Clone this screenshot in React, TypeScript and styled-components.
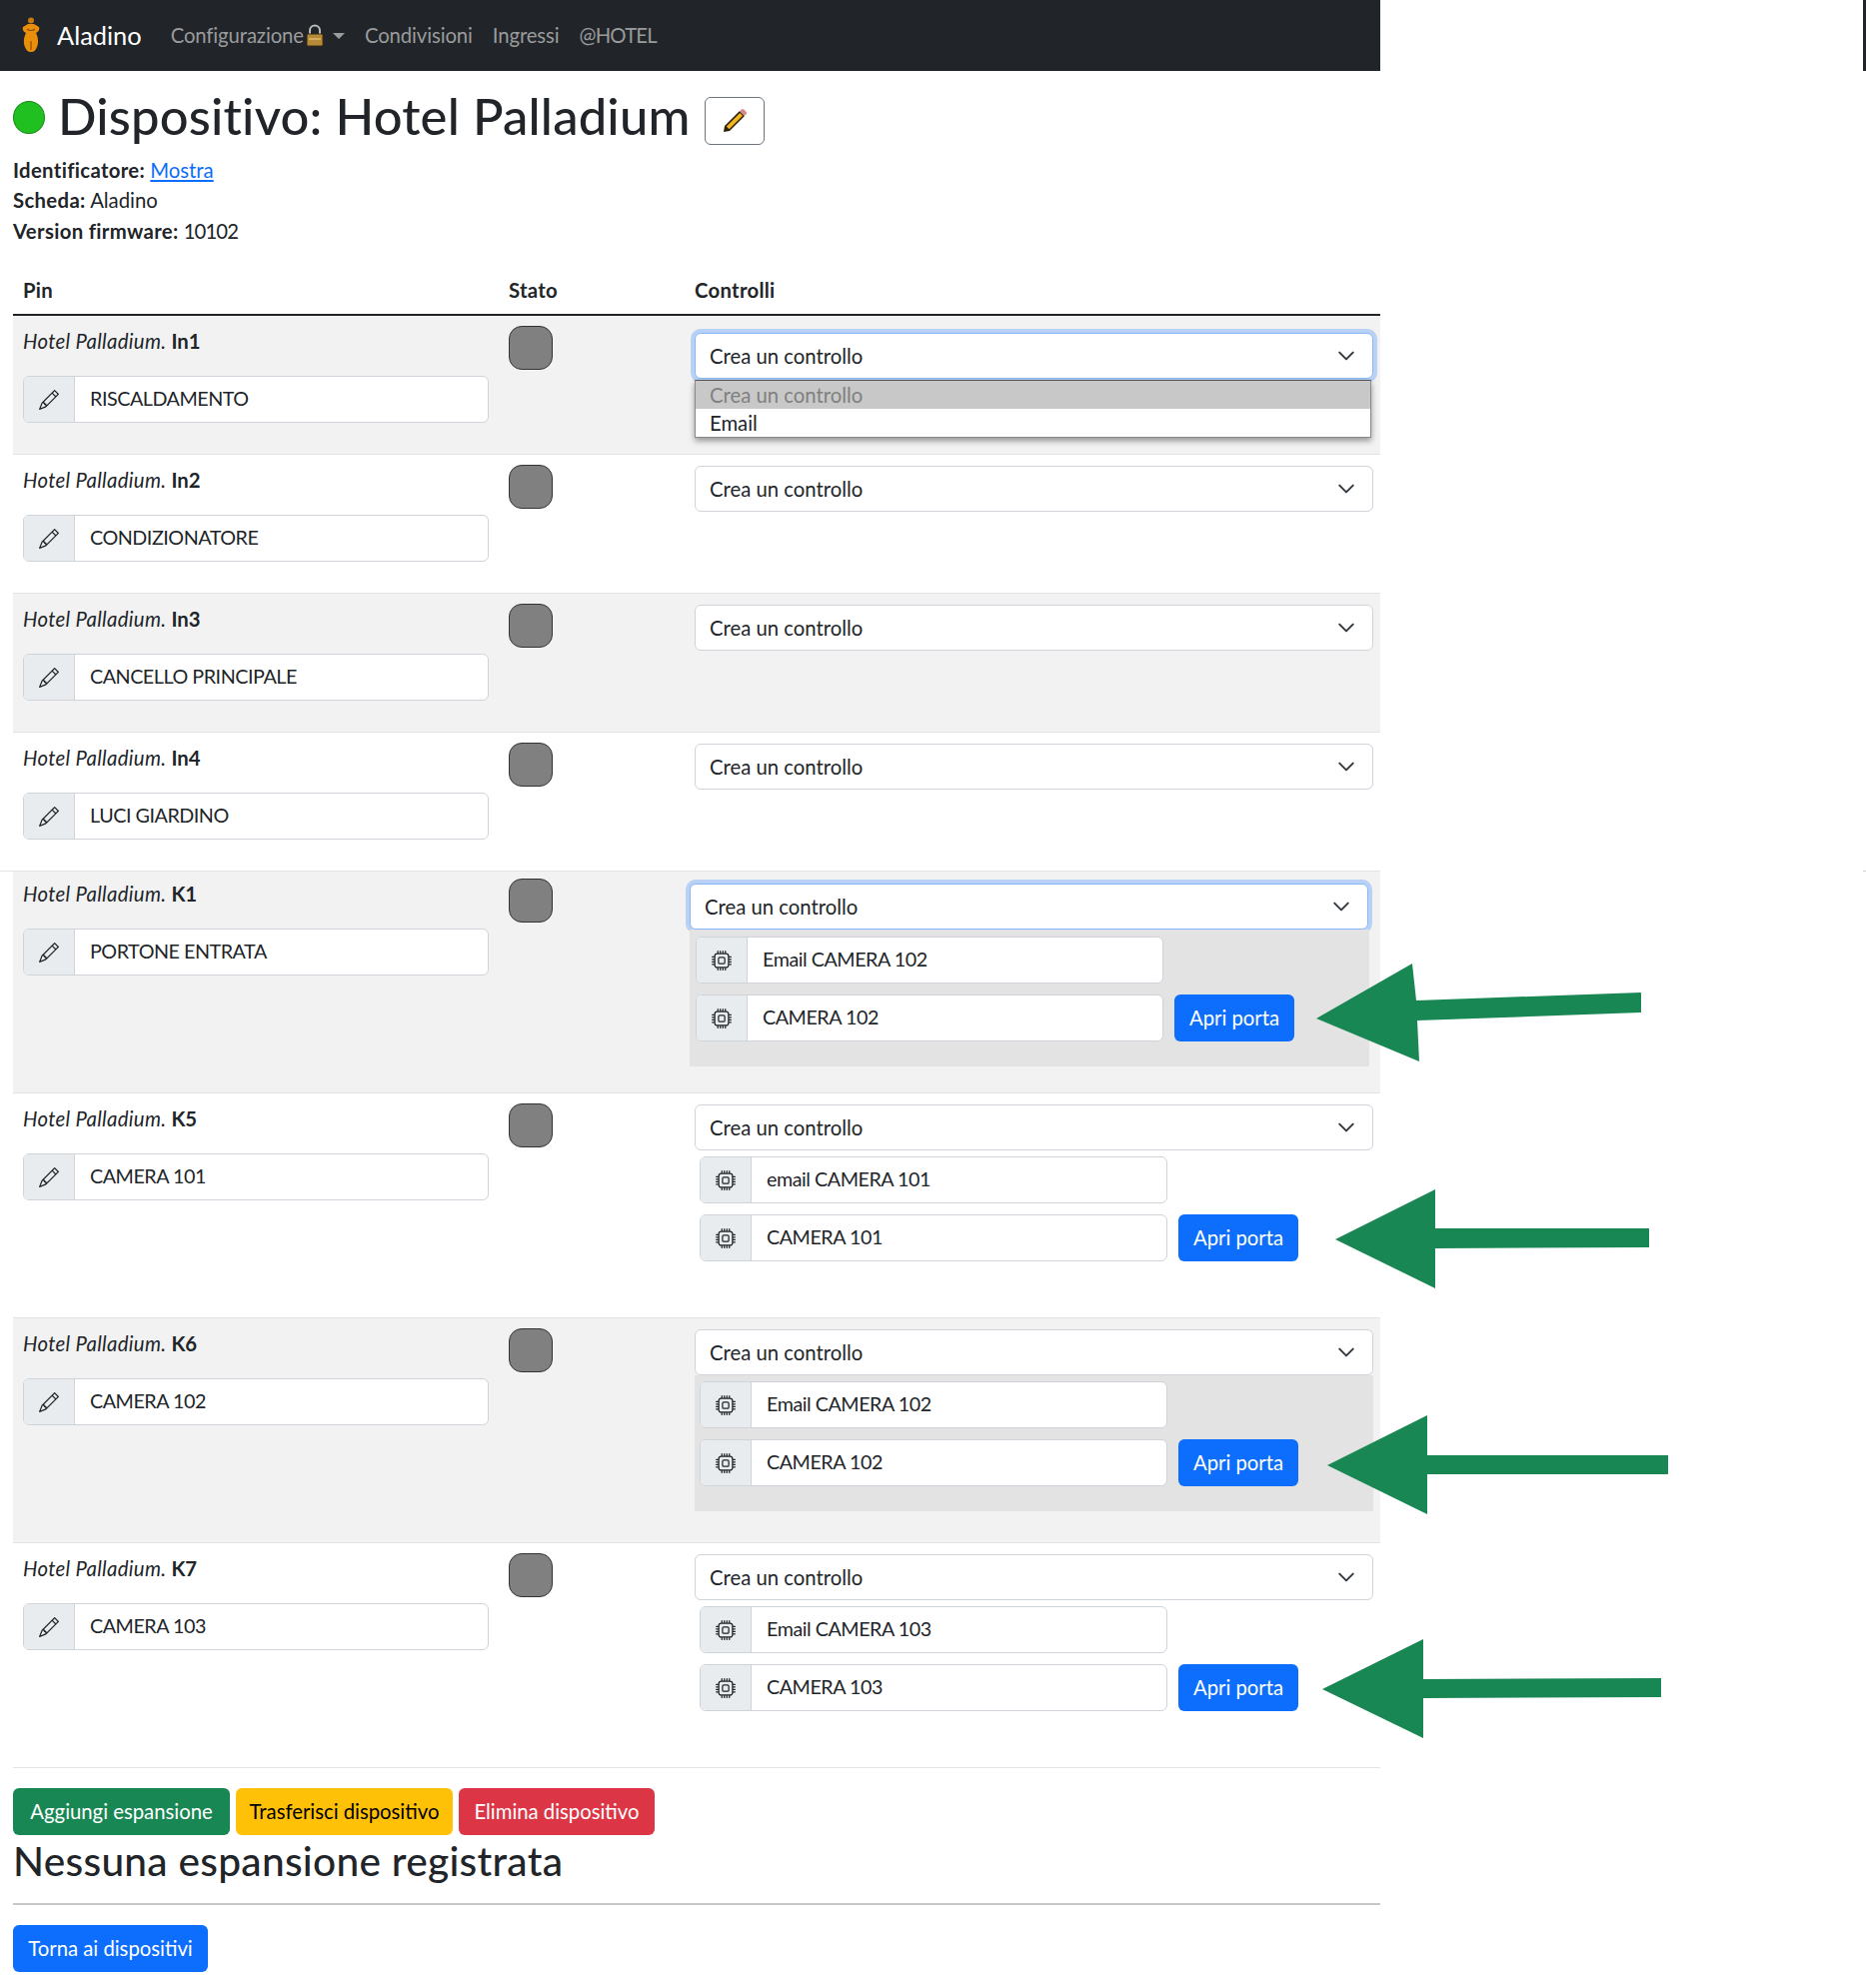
import { createGlobalStyle, styled } from "styled-components";
import { BsCpu, BsPencil } from "react-icons/bs";

const GlobalStyle = createGlobalStyle`
  html, body {
    margin: 0;
    padding: 0;
    background: #fff;
  }
  body {
    font-family: Lato, "Open Sans", "Liberation Sans", sans-serif;
    font-size: 20.3px;
    line-height: 30.4px;
    color: #212529;
  }
  * {
    box-sizing: border-box;
  }
`;

const Page = styled.div`
  position: relative;
  width: 1867px;
  height: 1989px;
  overflow: hidden;

  &::after {
    content: "";
    position: absolute;
    top: 0;
    right: 0;
    width: 3px;
    height: 71px;
    background: #212529;
  }
`;

const Navbar = styled.nav`
  width: 1381px;
  height: 71px;
  background: #212529;
  display: flex;
  align-items: center;
  padding-left: 21px;
`;

const Brand = styled.a`
  display: flex;
  align-items: center;
  gap: 16px;
  font-size: 25.4px;
  line-height: 28px;
  margin-top: -2px;
  color: #fff;
  margin-right: 29px;
`;

const NavLink = styled.a<{ $spacing?: number }>`
  display: flex;
  align-items: center;
  color: #9a9b9c;
  margin-right: 20px;
  letter-spacing: ${(p) => p.$spacing ?? -0.1}px;
`;

const Caret = styled.span`
  width: 0;
  height: 0;
  margin-left: 9px;
  border-top: 6px solid #9a9b9c;
  border-left: 6px solid transparent;
  border-right: 6px solid transparent;
`;

const Content = styled.main`
  width: 1381px;
  padding-left: 13px;
`;

const TitleRow = styled.div`
  display: flex;
  align-items: center;
  height: 84px;
  padding-top: 6px;
`;

const StatusDot = styled.span`
  width: 32px;
  height: 33px;
  margin: 2px 13px 0 0;
  border-radius: 50%;
  background: #1fc01f;
  border: 1px solid #1a8a1a;
`;

const Title = styled.h1`
  margin: 0;
  font-size: 50.7px;
  line-height: 60px;
  font-weight: 500;
  letter-spacing: 0.2px;
`;

const EditButton = styled.button`
  width: 60px;
  height: 48px;
  margin: 10px 0 0 14px;
  padding: 0;
  display: flex;
  align-items: center;
  justify-content: center;
  background: #fff;
  border: 1px solid #6c757d;
  border-radius: 6px;
`;

const InfoLine = styled.div`
  height: 30.4px;
`;

const Label = styled.strong`
  font-weight: 700;
  letter-spacing: 0.35px;
`;

const ShowLink = styled.a`
  color: #0d6efd;
  text-decoration: underline;
`;

const FirmwareValue = styled.span`
  letter-spacing: -0.9px;
`;

const TableHead = styled.div`
  display: grid;
  grid-template-columns: 486px 186px 1fr;
  height: 41px;
  margin-top: 29px;
  border-bottom: 2px solid #212529;
  font-weight: 700;
  letter-spacing: 0.3px;
`;

const HeadCell = styled.div`
  padding: 0 10px;
`;

const Row = styled.div<{ $striped?: boolean; $height: number; $tight?: boolean }>`
  position: relative;
  display: grid;
  grid-template-columns: 486px 186px 1fr;
  height: ${(p) => p.$height}px;
  padding-top: ${(p) => (p.$tight ? 7 : 10)}px;
  background: ${(p) => (p.$striped ? "#f2f2f2" : "#fff")};
  border-bottom: 1px solid #e3e3e3;

  ${(p) =>
    p.$tight &&
    `
    &::before {
      content: "";
      position: absolute;
      top: -1px;
      left: -13px;
      width: 13px;
      height: 1px;
      background: #e3e3e3;
    }
    &::after {
      content: "";
      position: absolute;
      top: -1px;
      left: 1851px;
      width: 3px;
      height: 1px;
      background: #d0d0d0;
    }
  `}
`;

const PinCell = styled.div`
  padding: 0 10px;
`;

const PinName = styled.div`
  height: 30px;
  margin-bottom: 20px;
  font-style: italic;
  letter-spacing: 0.35px;

  strong {
    font-style: normal;
    font-weight: 700;
    letter-spacing: 0;
  }
`;

const InputGroup = styled.div<{ $width: number }>`
  display: flex;
  width: ${(p) => p.$width}px;
  height: 47px;
  border: 1px solid #ced4da;
  border-radius: 6px;
  overflow: hidden;
  background: #fff;
`;

const Addon = styled.span`
  flex: 0 0 51px;
  display: flex;
  align-items: center;
  justify-content: center;
  background: #e9ecef;
  border-right: 1px solid #ced4da;
`;

const FieldText = styled.div`
  flex: 1;
  display: flex;
  align-items: center;
  padding-left: 15px;
  font-size: 19.7px;
  letter-spacing: -0.45px;
`;

const StatoCell = styled.div`
  padding: 0 10px;
`;

const StatusBox = styled.div`
  width: 44px;
  height: 44px;
  background: #808080;
  border: 1px solid #333;
  border-radius: 13px;
`;

const ControlCell = styled.div<{ $shift?: boolean }>`
  position: relative;
  padding-left: 10px;
  margin-left: ${(p) => (p.$shift ? -5 : 0)}px;
`;

const SelectBox = styled.div<{ $focus?: boolean; $drop?: number }>`
  display: flex;
  align-items: center;
  justify-content: space-between;
  width: 679px;
  height: 46px;
  margin-top: ${(p) => p.$drop ?? 1}px;
  padding: 0 17px 0 14px;
  background: #fff;
  border: 1px solid ${(p) => (p.$focus ? "#86b7fe" : "#ced4da")};
  border-radius: 6px;
  box-shadow: ${(p) =>
    p.$focus ? "0 0 0 4px rgba(13, 110, 253, 0.25)" : "none"};
`;

const DropList = styled.div`
  position: absolute;
  top: 54px;
  left: 10px;
  width: 677px;
  background: #fff;
  border: 1px solid #8a8a8a;
  border-top-color: #555;
  box-shadow: 0 3px 6px rgba(0, 0, 0, 0.4);
`;

const DropItem = styled.div<{ $active?: boolean }>`
  height: 28px;
  line-height: 28px;
  padding-left: 14px;
  background: ${(p) => (p.$active ? "#c8c8c8" : "#fff")};
  color: ${(p) => (p.$active ? "#808080" : "#212529")};
`;

const Panel = styled.div<{ $striped?: boolean; $focus?: boolean }>`
  width: ${(p) => (p.$focus ? 680 : 679)}px;
  padding: ${(p) => (p.$focus ? "7px 0 25px 6px" : "6px 0 25px 5px")};
  background: ${(p) => (p.$striped ? "#e3e3e3" : "transparent")};
  display: flex;
  flex-direction: column;
  gap: 11px;
`;

const ControlLine = styled.div`
  display: flex;
  gap: 11px;
`;

const Btn = styled.button<{ $color: string; $text?: string; $width?: number }>`
  height: 47px;
  width: ${(p) => (p.$width ? `${p.$width}px` : "auto")};
  padding: 0 ${(p) => (p.$width ? 0 : 16)}px;
  font: inherit;
  color: ${(p) => p.$text ?? "#fff"};
  background: ${(p) => p.$color};
  border: none;
  border-radius: 6px;
`;

const Actions = styled.div`
  display: flex;
  gap: 6px;
  margin-top: 20px;
`;

const SubTitle = styled.h2`
  margin: 1px 0 0;
  font-size: 40.6px;
  line-height: 49px;
  font-weight: 500;
  letter-spacing: 0.3px;
`;

const Divider = styled.hr`
  height: 2px;
  margin: 18px 0 20px;
  border: none;
  background: #c8c8c8;
`;

const ArrowLayer = styled.svg`
  position: absolute;
  top: 0;
  left: 0;
  pointer-events: none;
`;

const Chevron = () => (
  <svg width="18" height="18" viewBox="0 0 16 16">
    <path
      d="m2 5 6 6 6-6"
      fill="none"
      stroke="#343a40"
      strokeWidth="1.8"
      strokeLinecap="round"
      strokeLinejoin="round"
    />
  </svg>
);

const Logo = () => (
  <svg width="20" height="36" viewBox="0 0 20 36">
    <circle cx="10" cy="3.5" r="3" fill="#c9790c" />
    <path
      d="M7 7h6l5 3c1 3-1 5-3 6 2 4 3 9 1 14-1 3-3 5-6 5s-5-2-6-5C2 25 3 20 5 16c-2-1-4-3-3-6z"
      fill="#ea8f0c"
    />
    <path d="M6 12c2 2 6 2 8 0M10 24v9" stroke="#8a5206" strokeWidth="1.2" fill="none" />
  </svg>
);

const Lock = () => (
  <svg width="18" height="23" viewBox="0 0 18 23" style={{ marginLeft: 2 }}>
    <path
      d="M4 11V6.5a5 5 0 0 1 10 0V11"
      fill="none"
      stroke="#b9b9b9"
      strokeWidth="2"
    />
    <rect x="1" y="10" width="16" height="12" rx="1.5" fill="#b58b3a" stroke="#3a2c10" />
    <rect x="3" y="14" width="12" height="2" fill="#d6ad5c" />
  </svg>
);

const YellowPencil = () => (
  <svg width="26" height="26" viewBox="0 0 26 26">
    <path d="M18 3l5 5L8 23l-6 1 1-6z" fill="#2a2208" />
    <path d="M18.3 5l2.8 2.8L7.6 21.2l-2.8-2.8z" fill="#f2b51d" />
    <path d="M18 3.2l1.6-1.5a2 2 0 0 1 2.9 0l1.9 1.9a2 2 0 0 1 0 2.9L22.8 8z" fill="#d98a8a" />
  </svg>
);

type ControlItem = { text: string; action?: boolean };

type PinRow = {
  pin: string;
  name: string;
  height: number;
  tight?: boolean;
  open?: boolean;
  focus?: boolean;
  controls?: ControlItem[];
};

const rows: PinRow[] = [
  { pin: "In1", name: "RISCALDAMENTO", height: 139, open: true },
  { pin: "In2", name: "CONDIZIONATORE", height: 139 },
  { pin: "In3", name: "CANCELLO PRINCIPALE", height: 139 },
  { pin: "In4", name: "LUCI GIARDINO", height: 139 },
  {
    pin: "K1",
    name: "PORTONE ENTRATA",
    height: 222,
    tight: true,
    focus: true,
    controls: [{ text: "Email CAMERA 102" }, { text: "CAMERA 102", action: true }],
  },
  {
    pin: "K5",
    name: "CAMERA 101",
    height: 225,
    controls: [{ text: "email CAMERA 101" }, { text: "CAMERA 101", action: true }],
  },
  {
    pin: "K6",
    name: "CAMERA 102",
    height: 225,
    controls: [{ text: "Email CAMERA 102" }, { text: "CAMERA 102", action: true }],
  },
  {
    pin: "K7",
    name: "CAMERA 103",
    height: 225,
    controls: [{ text: "Email CAMERA 103" }, { text: "CAMERA 103", action: true }],
  },
];

const arrows = [
  "1317,1019 1413,964 1417,1001 1642,993 1642,1013 1418,1021 1420,1062",
  "1336,1240 1436,1190 1436,1229 1650,1229 1650,1248 1436,1249 1436,1289",
  "1328,1466 1428,1416 1428,1456 1669,1456 1669,1475 1428,1475 1428,1515",
  "1323,1690 1424,1640 1424,1680 1662,1679 1662,1698 1424,1699 1424,1739",
];

const App = () => {
  return (
    <Page>
      <GlobalStyle />
      <Navbar>
        <Brand>
          <Logo />
          Aladino
        </Brand>
        <NavLink>
          Configurazione
          <Lock />
          <Caret />
        </NavLink>
        <NavLink>Condivisioni</NavLink>
        <NavLink>Ingressi</NavLink>
        <NavLink $spacing={-0.8}>@HOTEL</NavLink>
      </Navbar>
      <Content>
        <TitleRow>
          <StatusDot />
          <Title>Dispositivo: Hotel Palladium</Title>
          <EditButton>
            <YellowPencil />
          </EditButton>
        </TitleRow>
        <InfoLine>
          <Label>Identificatore:</Label> <ShowLink>Mostra</ShowLink>
        </InfoLine>
        <InfoLine>
          <Label>Scheda:</Label> Aladino
        </InfoLine>
        <InfoLine>
          <Label>Version firmware:</Label> <FirmwareValue>10102</FirmwareValue>
        </InfoLine>
        <TableHead>
          <HeadCell>Pin</HeadCell>
          <HeadCell>Stato</HeadCell>
          <HeadCell>Controlli</HeadCell>
        </TableHead>
        {rows.map((row, i) => (
          <Row key={row.pin} $striped={i % 2 === 0} $height={row.height} $tight={row.tight}>
            <PinCell>
              <PinName>
                Hotel Palladium. <strong>{row.pin}</strong>
              </PinName>
              <InputGroup $width={466}>
                <Addon>
                  <BsPencil size={20} />
                </Addon>
                <FieldText>{row.name}</FieldText>
              </InputGroup>
            </PinCell>
            <StatoCell>
              <StatusBox />
            </StatoCell>
            <ControlCell $shift={row.focus}>
              <SelectBox
                $focus={row.open || row.focus}
                $drop={row.open ? 7 : row.focus ? 5 : 1}
              >
                Crea un controllo
                <Chevron />
              </SelectBox>
              {row.open && (
                <DropList>
                  <DropItem $active>Crea un controllo</DropItem>
                  <DropItem>Email</DropItem>
                </DropList>
              )}
              {row.controls && (
                <Panel $striped={i % 2 === 0} $focus={row.focus}>
                  {row.controls.map((c) => (
                    <ControlLine key={c.text}>
                      <InputGroup $width={468}>
                        <Addon>
                          <BsCpu size={20} />
                        </Addon>
                        <FieldText>{c.text}</FieldText>
                      </InputGroup>
                      {c.action && (
                        <Btn $color="#0d6efd" $width={120}>
                          Apri porta
                        </Btn>
                      )}
                    </ControlLine>
                  ))}
                </Panel>
              )}
            </ControlCell>
          </Row>
        ))}
        <Actions>
          <Btn $color="#198754" $width={217}>
            Aggiungi espansione
          </Btn>
          <Btn $color="#ffc107" $text="#000" $width={217}>
            Trasferisci dispositivo
          </Btn>
          <Btn $color="#dc3545" $width={196}>
            Elimina dispositivo
          </Btn>
        </Actions>
        <SubTitle>Nessuna espansione registrata</SubTitle>
        <Divider />
        <Btn $color="#0d6efd" $width={195}>
          Torna ai dispositivi
        </Btn>
      </Content>
      <ArrowLayer width="1867" height="1989" viewBox="0 0 1867 1989">
        {arrows.map((points) => (
          <polygon key={points} points={points} fill="#198754" />
        ))}
      </ArrowLayer>
    </Page>
  );
};

export default App;
